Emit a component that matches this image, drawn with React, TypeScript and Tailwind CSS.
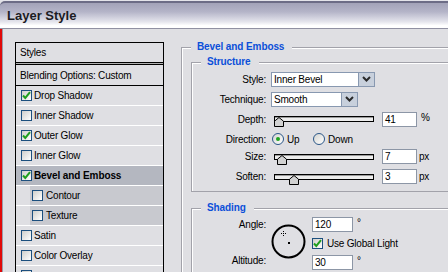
import React from "react";

const FONT = "font-['Liberation_Sans',Arial,sans-serif]";

const Check = ({ on }: { on?: boolean }) => (
  <span className="w-[11px] h-[11px] shrink-0 border border-[#1c4f7e] bg-[linear-gradient(135deg,#cfcfcb,#ffffff)] flex items-center justify-center">
    {on && (
      <svg width="9" height="9" viewBox="0 0 9 9">
        <path d="M1 4.5 L3.3 7 L8 1.2" fill="none" stroke="#1f9f1f" strokeWidth="2" />
      </svg>
    )}
  </span>
);

const Radio = ({ on }: { on?: boolean }) => (
  <span className="w-[12px] h-[12px] shrink-0 rounded-full border border-[#2b5788] bg-[linear-gradient(135deg,#d4d4d0,#ffffff)] flex items-center justify-center">
    {on && <span className="w-[4px] h-[4px] rounded-full bg-[#1ea51e]" />}
  </span>
);

const Field = ({ v, w = "w-[35px]" }: { v: string; w?: string }) => (
  <div className={`${w} h-[15px] border border-[#8c96a6] bg-white text-[10px] leading-[13px] pl-[2px] shrink-0`}>
    {v}
  </div>
);

const Slider = ({ left }: { left: number }) => (
  <div className="relative w-[100px] h-[6px] ml-[8px] border border-black bg-[#ececec] shadow-[inset_0_1px_0_#9a9a9a] shrink-0">
    <svg className="absolute top-0" style={{ left }} width="10" height="10" viewBox="0 0 10 10">
      <path d="M0.5 9.5 V4.2 L5 0.5 L9.5 4.2 V9.5 Z" fill="#d2d2d2" stroke="#000" strokeWidth="1" />
    </svg>
  </div>
);

const Dropdown = ({ v, w }: { v: string; w: string }) => (
  <div className={`${w} h-[15px] ml-[5px] flex border border-[#8898b0] bg-white shrink-0`}>
    <div className="flex-1 text-[10px] leading-[13px] pl-[2px]">{v}</div>
    <div className="w-[16px] h-full border-l border-[#8898b0] bg-[#c8d0dc] flex items-center justify-center">
      <svg width="9" height="6" viewBox="0 0 9 6">
        <path d="M1 1 L4.5 4.5 L8 1" fill="none" stroke="#2a2a2a" strokeWidth="2" />
      </svg>
    </div>
  </div>
);

const Label = ({ t }: { t: string }) => <div className="w-[74px] text-right shrink-0">{t}</div>;

function Group({ title, children, body = "" }: { title: string; children: React.ReactNode; body?: string }) {
  return (
    <div className="flex flex-col">
      <div className="flex h-[12px]">
        <div className="w-[10px] h-[6px] self-end border-t border-l border-[#a2a2aa] shadow-[inset_1px_1px_0_#fff]" />
        <span className="pl-[6px] pr-[8px] text-[10px] leading-[12px] font-bold text-[#0b4fd9] tracking-[-0.1px]">{title}</span>
        <div className="flex-1 h-[6px] self-end border-t border-[#a2a2aa] shadow-[inset_0_1px_0_#fff]" />
      </div>
      <div className={`border-l border-[#a2a2aa] shadow-[inset_1px_0_0_#fff] ${body}`}>{children}</div>
    </div>
  );
}

const rows = [
  { t: "Drop Shadow", on: true },
  { t: "Inner Shadow" },
  { t: "Outer Glow", on: true },
  { t: "Inner Glow" },
  { t: "Bevel and Emboss", on: true, sel: true },
  { t: "Contour", sub: true },
  { t: "Texture", sub: true },
  { t: "Satin" },
  { t: "Color Overlay" },
  { t: "" },
];

export default function App() {
  return (
    <div className={`w-[448px] h-[272px] overflow-hidden flex flex-col bg-[#dfdfe3] text-black text-[10px] tracking-[-0.2px] ${FONT}`}>
      {/* window behind */}
      <div className="h-[1px] bg-[#e4e4ea] shrink-0" />
      {/* title bar */}
      <div className="h-[28px] shrink-0 rounded-tl-[5px] border-t-2 border-b border-t-[#6c6c86] border-b-[#9090a2] bg-[linear-gradient(180deg,#a2a2b8_0%,#b4b4c8_35%,#e4e4ec_75%,#ffffff_90%)] flex items-center pl-[7px]">
        <span className="text-[13px] font-bold text-[#1c1c24] tracking-[0px]">Layer Style</span>
      </div>

      <div className="flex-1 flex">
        <div className="w-[2px] bg-[#e00808] shrink-0" />
        <div className="flex-1 flex border-l border-[#9a9aa8] pl-[12px]">
          {/* styles list */}
          <div className="w-[149px] shrink-0 mt-[13px] border border-black border-b-0 flex flex-col">
            <div className="h-[19px] flex items-center pl-[4px]">Styles</div>
            <div className="h-[3px] border-y border-black bg-[#b0b0b0]" />
            <div className="h-[21px] flex items-center pl-[4px] border-b border-black">Blending Options: Custom</div>
            {rows.map((r, i) => (
              <div key={i} className="h-[20px] flex border-b border-white">
                {r.sub && <div className="w-[14px] shrink-0" />}
                <div
                  className={`flex-1 flex items-center gap-[2px] ${r.sub ? "pl-[2px] bg-[#c8c9cf]" : "pl-[5px]"} ${r.sel ? "bg-[#b4b7c0] font-bold tracking-[-0.1px]" : ""}`}
                >
                  <Check on={r.on} />
                  {r.t && <span className={r.sub ? "ml-[1px]" : ""}>{r.t}</span>}
                </div>
              </div>
            ))}
          </div>

          {/* right panel */}
          <div className="flex-1 ml-[17px] mt-[12px] -mr-[20px]">
            <Group title="Bevel and Emboss" body="pl-[9px] pt-[3px]">
              <Group title="Structure" body="pt-[1px] pb-[7px] border-b shadow-[inset_1px_0_0_#fff,0_1px_0_#fff]">
                <div className="h-[20px] flex items-center">
                  <Label t="Style:" />
                  <Dropdown v="Inner Bevel" w="w-[104px]" />
                </div>
                <div className="h-[20px] flex items-center">
                  <Label t="Technique:" />
                  <Dropdown v="Smooth" w="w-[87px]" />
                </div>
                <div className="h-[20px] flex items-center">
                  <Label t="Depth:" />
                  <Slider left={-1} />
                  <div className="ml-[8px]"><Field v="41" /></div>
                  <span className="ml-[4px] -mt-[4px]">%</span>
                </div>
                <div className="h-[20px] flex items-center">
                  <Label t="Direction:" />
                  <div className="ml-[6px] w-[41px] flex items-center gap-[3px]">
                    <Radio on />
                    <span>Up</span>
                  </div>
                  <div className="flex items-center gap-[3px]">
                    <Radio />
                    <span>Down</span>
                  </div>
                </div>
                <div className="h-[15px] flex items-center">
                  <Label t="Size:" />
                  <Slider left={2} />
                  <div className="ml-[8px]"><Field v="7" /></div>
                  <span className="ml-[2px]">px</span>
                </div>
                <div className="h-[15px] mt-[5px] flex items-center">
                  <Label t="Soften:" />
                  <Slider left={14} />
                  <div className="ml-[8px]"><Field v="3" /></div>
                  <span className="ml-[2px]">px</span>
                </div>
              </Group>

              <div className="mt-[10px]">
                <Group title="Shading" body="pt-[3px] h-[80px]">
                  <div className="flex items-start">
                    <div className="flex flex-col">
                      <div className="h-[15px] flex items-center"><Label t="Angle:" /></div>
                      <div className="h-[15px] mt-[21px] flex items-center"><Label t="Altitude:" /></div>
                    </div>
                    <svg className="ml-[5px] mt-[7px] shrink-0" width="35" height="35" viewBox="0 0 35 35">
                      <circle cx="17.5" cy="17.5" r="16" fill="none" stroke="#000" strokeWidth="2" />
                      <rect x="12" y="7" width="1" height="1" fill="#000" />
                      <rect x="12" y="11" width="1" height="1" fill="#000" />
                      <rect x="10" y="9" width="1" height="1" fill="#000" />
                      <rect x="14" y="9" width="1" height="1" fill="#000" />
                      <rect x="12" y="9" width="1" height="1" fill="#000" />
                      <rect x="17" y="18" width="2" height="2" fill="#000" />
                    </svg>
                    <div className="ml-[6px] flex flex-col">
                      <div className="flex items-start">
                        <Field v="120" w="w-[41px]" />
                        <span className="ml-[4px] -mt-[2px]">°</span>
                      </div>
                      <div className="h-[13px] mt-[5px] flex items-center gap-[4px]">
                        <Check on />
                        <span>Use Global Light</span>
                      </div>
                      <div className="flex items-start mt-[5px]">
                        <Field v="30" w="w-[41px]" />
                        <span className="ml-[4px] -mt-[2px]">°</span>
                      </div>
                    </div>
                  </div>
                </Group>
              </div>
            </Group>
          </div>
        </div>
      </div>
    </div>
  );
}
